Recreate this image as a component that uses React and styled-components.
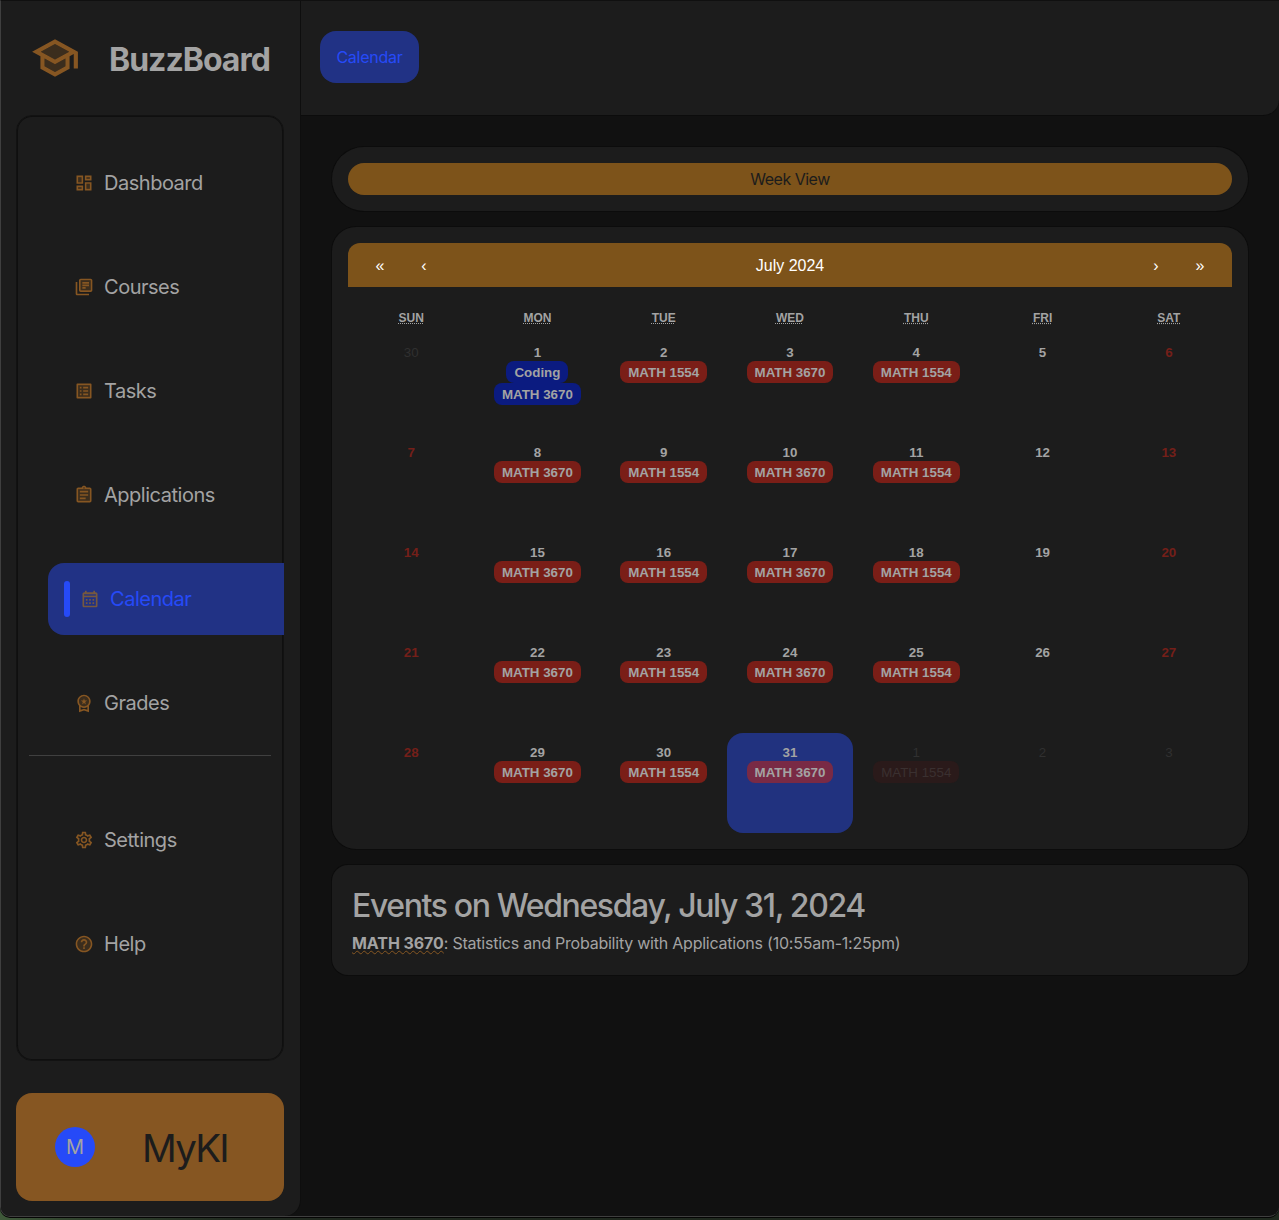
import React from "react";
import styled, { createGlobalStyle, css } from "styled-components";
import { MdOutlineSettings } from "react-icons/md";

const GlobalStyle = createGlobalStyle`
  *, *::before, *::after { box-sizing: border-box; }
  body {
    margin: 0;
    background: #101410;
    font-family: Inter, "Liberation Sans", sans-serif;
    color: #a3a3a3;
    -webkit-font-smoothing: antialiased;
  }
  button { font: inherit; color: inherit; border: 0; padding: 0; margin: 0; background: none; }
`;

const Desktop = styled.div`
  width: 1279px;
  height: 1220px;
  overflow: hidden;
  background: linear-gradient(90deg, #3f5a3a 0, #33462f 60px, #20291f 240px, #1f291e 100%);
`;

const Window = styled.div`
  display: flex;
  width: 1279px;
  height: 1217px;
  background: #111111;
  border: 1px solid #3f3f3f;
  border-top-color: #101010;
  border-right: 0;
  border-radius: 0 0 10px 10px;
  box-shadow: 0 1px 0 #050505;
  overflow: hidden;
`;

const Sidebar = styled.aside`
  display: flex;
  flex-direction: column;
  width: 300px;
  height: 1215px;
  flex: none;
  padding: 0 16px 15px 15px;
  background: #1c1c1c;
  border-right: 1px solid #0e0e0e;
  border-radius: 0 0 16px 0;
`;

const Brand = styled.div`
  display: flex;
  align-items: center;
  height: 114px;
  padding-left: 14px;
  svg { width: 50px; height: 50px; color: #865622; flex: none; }
`;

const BrandName = styled.h1`
  margin: 3px 0 0 29px;
  font-size: 32px;
  line-height: 40px;
  font-weight: 700;
  letter-spacing: -1px;
`;

const Nav = styled.nav`
  display: flex;
  flex-direction: column;
  height: 946px;
  padding: 31px 0 0 31px;
  border: 1px solid #121212;
  box-shadow: inset 0 0 0 1px #0f0f0f;
  border-radius: 16px;
`;

const NavGroup = styled.div`
  display: flex;
  flex-direction: column;
  gap: 32px;
`;

const NavItem = styled.a`
  display: flex;
  align-items: center;
  height: 72px;
  padding-left: 26px;
  font-size: 20px;
  letter-spacing: -0.48px;
  border-radius: 16px 0 0 16px;
  svg { width: 20px; height: 20px; margin-right: 10px; color: #865622; flex: none; }
  ${(p) =>
    p.$active &&
    css`
      margin-right: -1px;
      padding-left: 16px;
      background: #213285;
      color: #264af8;
      svg { margin-left: 10px; color: #76583f; }
    `}
`;

const ActiveBar = styled.span`
  width: 6px;
  height: 36px;
  border-radius: 3px;
  background: #264af8;
`;

const Divider = styled.hr`
  width: 242px;
  height: 1px;
  margin: 16px 0 48px -19px;
  border: 0;
  background: #404040;
`;

const Profile = styled.div`
  display: flex;
  align-items: center;
  height: 108px;
  margin-top: 32px;
  padding-left: 39px;
  border-radius: 16px;
  background: #865622;
`;

const Avatar = styled.span`
  display: grid;
  place-items: center;
  width: 40px;
  height: 40px;
  border-radius: 50%;
  background: #264af8;
  font-size: 20px;
`;

const UserName = styled.span`
  margin: 2px 0 0 47px;
  font-size: 38.5px;
  letter-spacing: -1.8px;
  color: #1c1c1c;
`;

const Page = styled.div`
  display: flex;
  flex-direction: column;
  flex: 1;
`;

const Header = styled.header`
  display: flex;
  align-items: center;
  height: 115px;
  padding: 0 0 3px 19px;
  background: #1c1c1c;
  border-bottom: 1px solid #0c0c0c;
  border-radius: 0 0 16px 0;
`;

const Crumb = styled.button`
  height: 52px;
  width: 99px;
  border-radius: 16px;
  background: #213285;
  color: #264af8;
  font-size: 16px;
  letter-spacing: -0.25px;
`;

const Content = styled.main`
  display: flex;
  flex-direction: column;
  gap: 16px;
  padding: 31px 31px 0;
`;

const Card = styled.section`
  padding: ${(p) => p.$pad || "16px"};
  height: ${(p) => p.$height}px;
  border-radius: ${(p) => p.$radius}px;
  background: #1c1c1c;
  box-shadow: 0 0 0 1px #0c0c0c;
`;

const WeekButton = styled.button`
  display: block;
  width: 100%;
  height: 32px;
  border-radius: 16px;
  background: #7d531a;
  color: #1c1c1c;
  font-size: 16px;
  letter-spacing: -0.5px;
`;

const Calendar = styled.div`
  font-family: "Liberation Sans", Arial, sans-serif;
`;

const MonthBar = styled.div`
  display: flex;
  height: 44px;
  padding: 1px 10px 0;
  margin-bottom: 16px;
  border-radius: 12px 12px 0 0;
  background: #7d531a;
  color: #ffffff;
  font-size: 16px;
`;

const Arrow = styled.button`
  width: 44px;
`;

const MonthLabel = styled.button`
  flex: 1;
`;

const Grid = styled.div`
  display: grid;
  grid-template-columns: repeat(7, 1fr);
`;

const Weekday = styled.div`
  height: 30px;
  line-height: 31px;
  text-align: center;
  font-size: 12px;
  font-weight: 700;
  text-transform: uppercase;
  abbr { text-decoration: underline dotted; }
`;

const Tile = styled.div`
  display: flex;
  flex-direction: column;
  align-items: center;
  height: 100px;
  padding-top: 10px;
  border-radius: 16px;
  font-size: 13.33px;
  font-weight: ${(p) => (p.$outside ? 400 : 700)};
  color: ${(p) => (p.$outside ? "#303030" : p.$weekend ? "#741f19" : "#a3a3a3")};
  background: ${(p) => (p.$selected ? "#21327f" : "transparent")};
`;

const DayNumber = styled.span`
  height: 18px;
  line-height: 20px;
`;

const tones = {
  red: ["#7a1e17", "#a3a3a3"],
  blue: ["#0b1b80", "#a3a3a3"],
  pink: ["#792a45", "#a3a3a3"],
  faint: ["#2a1a1a", "#3a3030"],
};

const EventPill = styled.span`
  height: 22px;
  line-height: 24px;
  padding: 0 8px;
  border-radius: 8px;
  background: ${(p) => tones[p.$tone][0]};
  color: ${(p) => tones[p.$tone][1]};
`;

const EventsTitle = styled.h2`
  margin: 1px 0 0;
  font-size: 32px;
  line-height: 40px;
  font-weight: 500;
  letter-spacing: -1.39px;
  white-space: nowrap;
`;

const EventLine = styled.p`
  margin: 5px 0 0;
  font-size: 16px;
  line-height: 24px;
  letter-spacing: -0.23px;
`;

const CourseCode = styled.strong`
  font-weight: 700;
  letter-spacing: -0.07px;
  text-decoration: underline wavy #865622 1px;
  text-underline-offset: 1px;
`;

function TwoTone({ tint, d }) {
  return (
    <svg viewBox="0 0 24 24" fill="currentColor" aria-hidden="true">
      {tint && <path d={tint} opacity="0.3" />}
      <path d={d} />
    </svg>
  );
}

const SchoolIcon = () => (
  <TwoTone
    tint="M7 12.27v3.72l5 2.73 5-2.73v-3.72L12 15zM5.18 9 12 12.72 18.82 9 12 5.28z"
    d="M12 3L1 9l4 2.18v6L12 21l7-3.82v-6l2-1.09V17h2V9L12 3zm6.82 6L12 12.72 5.18 9 12 5.28 18.82 9zM17 15.99l-5 2.73-5-2.73v-3.72L12 15l5-2.73v3.72z"
  />
);

const DashboardIcon = () => (
  <TwoTone
    tint="M5 5h4v6H5zm10 8h4v6h-4zM5 17h4v2H5zM15 5h4v2h-4z"
    d="M3 13h8V3H3v10zm2-8h4v6H5V5zm8 16h8V11h-8v10zm2-8h4v6h-4v-6zM13 3v6h8V3h-8zm6 4h-4V5h4v2zM3 21h8v-6H3v6zm2-4h4v2H5v-2z"
  />
);

const CoursesIcon = () => (
  <TwoTone
    tint="M8 4v12h12V4H8z"
    d="M4 20h14v2H4c-1.1 0-2-.9-2-2V6h2v14zM20 2H8c-1.1 0-2 .9-2 2v12c0 1.1.9 2 2 2h12c1.1 0 2-.9 2-2V4c0-1.1-.9-2-2-2zm0 14H8V4h12v12zM10 9h8v2h-8zM10 6h8v2h-8zM10 12h4v2h-4z"
  />
);

const TasksIcon = () => (
  <TwoTone
    tint="M5 5h14v14H5z"
    d="M11 7h6v2h-6zm0 4h6v2h-6zm0 4h6v2h-6zM7 7h2v2H7zm0 4h2v2H7zm0 4h2v2H7zM20.1 3H3.9c-.5 0-.9.4-.9.9v16.2c0 .4.4.9.9.9h16.2c.4 0 .9-.5.9-.9V3.9c0-.5-.5-.9-.9-.9zM19 19H5V5h14v14z"
  />
);

const ApplicationsIcon = () => (
  <TwoTone
    tint="M5 5h14v14H5z"
    d="M7 15h7v2H7zm0-4h10v2H7zm0-4h10v2H7zm12-4h-4.18C14.4 1.84 13.3 1 12 1s-2.4.84-2.82 2H5c-1.1 0-2 .9-2 2v14c0 1.1.9 2 2 2h14c1.1 0 2-.9 2-2V5c0-1.1-.9-2-2-2zm-7-.25c.41 0 .75.34.75.75s-.34.75-.75.75-.75-.34-.75-.75.34-.75.75-.75zM19 19H5V5h14v14z"
  />
);

const CalendarIcon = () => (
  <TwoTone
    tint="M5 6h14v2H5z"
    d="M19 4h-1V2h-2v2H8V2H6v2H5c-1.1 0-2 .9-2 2v14c0 1.1.9 2 2 2h14c1.1 0 2-.9 2-2V6c0-1.1-.9-2-2-2zm0 16H5V10h14v10zm0-12H5V6h14v2zM7 12h2v2H7zM11 12h2v2h-2zM15 12h2v2h-2zM7 16h2v2H7zM11 16h2v2h-2zM15 16h2v2h-2z"
  />
);

const GradesIcon = () => (
  <TwoTone
    tint="M12 4c-3.31 0-6 2.69-6 6s2.69 6 6 6 6-2.69 6-6-2.69-6-6-6z"
    d="M9.68 13.69 12 11.93l2.31 1.76-.88-2.85L15.75 9h-2.84L12 6.19 11.09 9H8.25l2.31 1.84-.88 2.85zM20 10c0-4.42-3.58-8-8-8s-8 3.58-8 8c0 2.03.76 3.87 2 5.28V23l6-2 6 2v-7.72c1.24-1.41 2-3.25 2-5.28zm-8-6c3.31 0 6 2.69 6 6s-2.69 6-6 6-6-2.69-6-6 2.69-6 6-6zm0 15-4 1.02v-3.1c1.18.68 2.54 1.08 4 1.08s2.82-.4 4-1.08v3.1L12 19z"
  />
);

const HelpIcon = () => (
  <TwoTone
    tint="M12 4c-4.41 0-8 3.59-8 8s3.59 8 8 8 8-3.59 8-8-3.59-8-8-8z"
    d="M11 18h2v-2h-2v2zm1-16C6.48 2 2 6.48 2 12s4.48 10 10 10 10-4.48 10-10S17.52 2 12 2zm0 18c-4.41 0-8-3.59-8-8s3.59-8 8-8 8 3.59 8 8-3.59 8-8 8zm0-14c-2.21 0-4 1.79-4 4h2c0-1.1.9-2 2-2s2 .9 2 2c0 2-3 1.75-3 5h2c0-2.25 3-2.5 3-5 0-2.21-1.79-4-4-4z"
  />
);

const primaryLinks = [
  ["Dashboard", DashboardIcon],
  ["Courses", CoursesIcon],
  ["Tasks", TasksIcon],
  ["Applications", ApplicationsIcon],
  ["Calendar", CalendarIcon, true],
  ["Grades", GradesIcon],
];

const secondaryLinks = [
  ["Settings", MdOutlineSettings],
  ["Help", HelpIcon],
];

const weekdays = ["Sun", "Mon", "Tue", "Wed", "Thu", "Fri", "Sat"];

const courseByWeekday = { 1: "MATH 3670", 2: "MATH 1554", 3: "MATH 3670", 4: "MATH 1554" };

const days = Array.from({ length: 35 }, (_, i) => {
  const weekday = i % 7;
  const number = i === 0 ? 30 : i > 31 ? i - 31 : i;
  const outside = i === 0 || i > 31;
  const selected = i === 31;
  const tone = outside ? "faint" : selected ? "pink" : i === 1 ? "blue" : "red";
  const events = courseByWeekday[weekday] ? [courseByWeekday[weekday]] : [];
  if (i === 1) events.unshift("Coding");
  return { number, outside, selected, tone, events, weekend: weekday === 0 || weekday === 6 };
});

function NavLinks({ links }) {
  return (
    <NavGroup>
      {links.map(([label, Icon, active]) => (
        <NavItem key={label} $active={active}>
          {active && <ActiveBar />}
          <Icon />
          {label}
        </NavItem>
      ))}
    </NavGroup>
  );
}

export default function App() {
  return (
    <Desktop>
      <GlobalStyle />
      <Window>
        <Sidebar>
          <Brand>
            <SchoolIcon />
            <BrandName>BuzzBoard</BrandName>
          </Brand>
          <Nav>
            <NavLinks links={primaryLinks} />
            <Divider />
            <NavLinks links={secondaryLinks} />
          </Nav>
          <Profile>
            <Avatar>M</Avatar>
            <UserName>MyKI</UserName>
          </Profile>
        </Sidebar>
        <Page>
          <Header>
            <Crumb>Calendar</Crumb>
          </Header>
          <Content>
            <Card $height={64} $radius={32}>
              <WeekButton>Week View</WeekButton>
            </Card>
            <Card $height={622} $radius={24}>
              <Calendar>
                <MonthBar>
                  <Arrow>«</Arrow>
                  <Arrow>‹</Arrow>
                  <MonthLabel>July 2024</MonthLabel>
                  <Arrow>›</Arrow>
                  <Arrow>»</Arrow>
                </MonthBar>
                <Grid>
                  {weekdays.map((d) => (
                    <Weekday key={d}>
                      <abbr>{d}</abbr>
                    </Weekday>
                  ))}
                  {days.map((d, i) => (
                    <Tile key={i} $outside={d.outside} $weekend={d.weekend} $selected={d.selected}>
                      <DayNumber>{d.number}</DayNumber>
                      {d.events.map((e) => (
                        <EventPill key={e} $tone={d.tone}>
                          {e}
                        </EventPill>
                      ))}
                    </Tile>
                  ))}
                </Grid>
              </Calendar>
            </Card>
            <Card $height={110} $radius={16} $pad="20px">
              <EventsTitle>Events on Wednesday, July 31, 2024</EventsTitle>
              <EventLine>
                <CourseCode>MATH 3670</CourseCode>: Statistics and Probability with Applications (10:55am-1:25pm)
              </EventLine>
            </Card>
          </Content>
        </Page>
      </Window>
    </Desktop>
  );
}
